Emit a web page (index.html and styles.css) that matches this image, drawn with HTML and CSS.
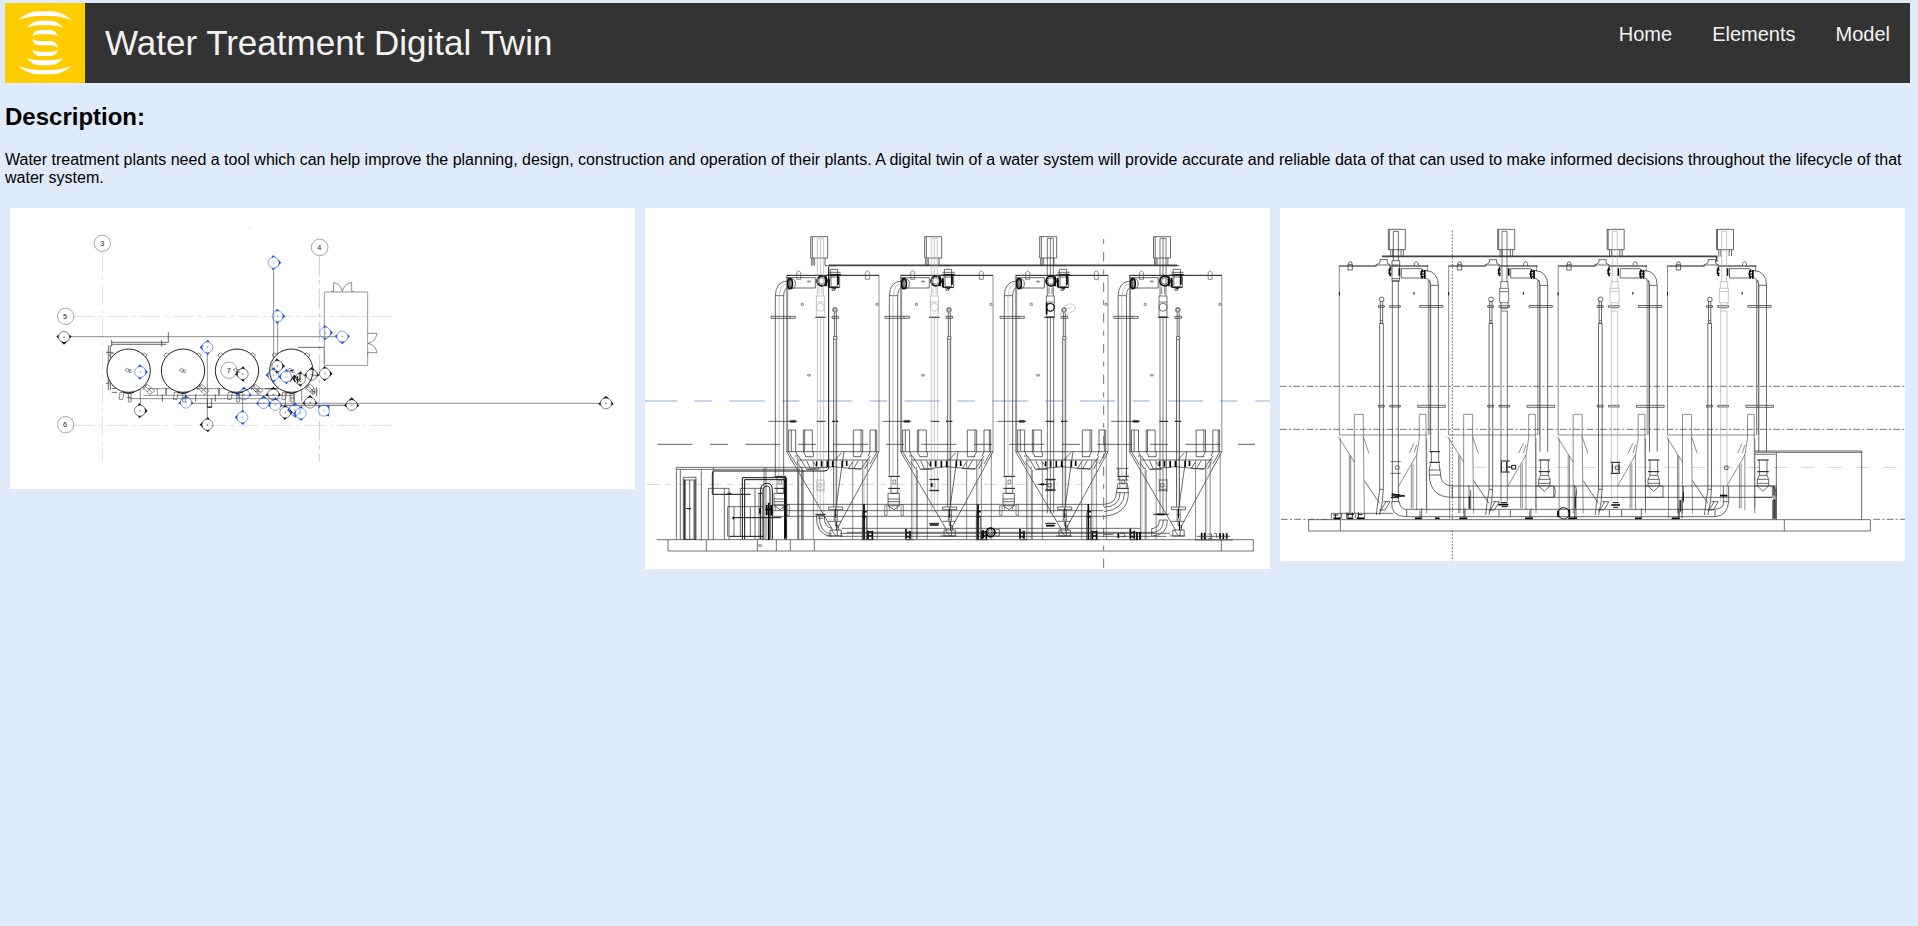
FILE: index.html
```html
<!DOCTYPE html>
<html lang="en">
<head>
<meta charset="utf-8">
<title>Water Treatment Digital Twin</title>
<link rel="stylesheet" href="styles.css">
</head>
<body>
<header class="navbar">
  <svg class="logo" viewBox="15 9 240 240" aria-label="Logo">
    <path d="M54 60Q85 34 115 34H155Q185 34 215 60Q180 48 155 48H115Q90 48 54 60Z"/>
    <path d="M81 83Q98 62 118 62H152Q172 62 189 83Q170 76 152 76H118Q100 76 81 83Z"/>
    <path d="M97 108Q102 90 120 90H150Q168 90 173 108Q162 103 150 103H120Q108 103 97 108Z"/>
    <path d="M97 117Q108 123 120 123H150Q170 123 174 143Q163 136 150 136H120Q100 136 97 117Z"/>
    <path d="M97 150Q108 155 120 155H150Q162 155 173 150Q168 168 150 168H120Q102 168 97 150Z"/>
    <path d="M81 175Q100 181 118 181H152Q170 181 189 175Q172 196 152 196H118Q98 196 81 175Z"/>
    <path d="M54 198Q90 210 115 210H155Q180 210 215 198Q185 223 155 223H115Q85 223 54 198Z"/>
  </svg>
  <div class="brand">Water Treatment Digital Twin</div>
  <nav class="links"><a href="#">Home</a><a href="#">Elements</a><a href="#">Model</a></nav>
</header>
<main>
  <h2>Description:</h2>
  <p>Water treatment plants need a tool which can help improve the planning, design, construction and operation of their plants. A digital twin of a water system will provide accurate and reliable data of that can used to make informed decisions throughout the lifecycle of that water system.</p>
  <section class="row">
    <div class="column">
      <svg class="drawing plan" viewBox="30 24 1875 843">
        <defs>
          <g id="mark"><circle class="ring" r="16.500"/><path class="tip" d="M-23 2L0-23L23 2L15 7A16 16 0 0 0 9-13L0-16L-9-13A16 16 0 0 0-15 7Z"/><path class="ring" d="M-3 0H3"/></g>
          <g id="plan-tank">
            <circle class="tank" cx="386" cy="512" r="65"/>
            <path class="mid" d="M334 473l-6-8 8-6 10 5M438 473l3-9-9-5-8 4M374 511l8-7 5 6 9 0M376 510l8 7 4-8v8h8"/>
            <path class="mid" d="M428 561l14-8 22 19-14 12zM434 557l22 20M440 554l-12 16M454 564l-13 11M360 577l-3 21h11l4-21zM378 579h15v27h-8v-24M385 594h12"/>
            <path class="thick" d="M370 577q16 7 32 0"/>
          </g>
        </defs>
        <path class="axis pale" d="M307 155V783M222 349H1174M222 676H1174"/>
        <path class="axis" d="M958 167V783"/>
        <path class="mid" d="M212 410H1010M821 208V520M833 369V500M578 610H1800M833 526H950M421 536V612M622 462V655M728 540V632M856 548V622"/>
        <path class="ink" d="M335 427H505V397M335 433H499M325 436V570M331 436V570M335 420V440M485 420V440M318 457H340M318 550H328M894 442H973V492M850 616H1036M622 595v27h13v-27M335 565H352M335 577H352"/>
        <path class="mid" d="M445 566H830M430 586H880M390 596H840M472 566v20M498 566v20M657 566v20M870 586v20M905 540v65M883 560v60"/>
        <path class="ink" d="M487 583v22M587 583v22M646 583v22M498 564v20M657 564v20M672 566h50M795 566h40M950 562v26M943 568v14"/>
        <use href="#plan-tank"/><use href="#plan-tank" x="163"/><use href="#plan-tank" x="325"/><use href="#plan-tank" x="488"/>
        <path class="green" d="M766 575h16M774 567v16M930 575h16M938 567v16M380 592h12M386 586v12"/>
        <path class="room" d="M973 276H1103V496H973Z"/>
        <path class="mid" d="M993 274H1001V247Q1022 252 1027 274Q1032 252 1055 247V274H1061M1103 400H1131Q1127 425 1104 430Q1127 435 1131 458H1103V464"/>
        <path class="thick" d="M622 621h14M870 512h10M870 545l12-18 12 18M882 524l20 22M893 528v22M885 546l-8-16M900 520v20"/>
        <g class="grid-bubble">
          <circle cx="307" cy="130" r="24.500"/><circle cx="959" cy="142" r="25"/><circle cx="197" cy="349" r="24.500"/><circle cx="197" cy="674" r="24.500"/><circle cx="687" cy="511" r="24.500"/>
          <text x="307" y="138">3</text><text x="958" y="150">4</text><text x="195" y="357">5</text><text x="195" y="682">6</text><text x="686" y="519">7</text>
        </g>
        <g class="black">
          <use href="#mark" transform="translate(192 411) rotate(180)"/><use href="#mark" transform="translate(420 632) rotate(90)"/><use href="#mark" transform="translate(622 674) rotate(-90)"/><use href="#mark" transform="translate(728 522) rotate(-90)"/><use href="#mark" transform="translate(975 521) rotate(90)"/><use href="#mark" transform="translate(1055 615)"/><use href="#mark" transform="translate(1818 610)"/><use href="#mark" transform="translate(930 608)"/><use href="#mark" transform="translate(856 637) rotate(90)"/><use href="#mark" transform="translate(820 583)"/><use href="#mark" transform="translate(832 498) rotate(90)"/><use href="#mark" transform="translate(935 524)"/><use href="#mark" transform="translate(900 537) rotate(-90)"/>
        </g>
        <g class="blue">
          <use href="#mark" transform="translate(821 188) rotate(90)"/><use href="#mark" transform="translate(833 349) rotate(90)"/><use href="#mark" transform="translate(976 398) rotate(90)"/><use href="#mark" transform="translate(1027 410) rotate(180)"/><use href="#mark" transform="translate(622 442) rotate(-90)"/><use href="#mark" transform="translate(421 516) rotate(90)"/><use href="#mark" transform="translate(558 608)"/><use href="#mark" transform="translate(732 583)"/><use href="#mark" transform="translate(727 652) rotate(-90)"/><use href="#mark" transform="translate(791 609)"/><use href="#mark" transform="translate(826 615)"/><use href="#mark" transform="translate(820 525) rotate(-90)"/><use href="#mark" transform="translate(858 530) rotate(-90)"/><use href="#mark" transform="translate(902 640) rotate(-90)"/><use href="#mark" transform="translate(884 630) rotate(-90)"/><use href="#mark" transform="translate(972 632) rotate(45)"/>
        </g>
        <path class="axis" d="M749 82h4"/>
      </svg>
    </div>
    <div class="column">
      <svg class="drawing front" viewBox="15 24 1875 1083">
        <defs>
          <g id="front-bay">
            <path class="ink" d="M512 110H563V174H512ZM517 110V174M515 175V197M523 175V197M519 175V197M555 174V197H590"/>
            <path class="mid" d="M440 755V226M443 230V755M717 226V755"/>
            <path class="thick" d="M440 226H717"/>
            <path class="mid" d="M470 238V217q6-9 12 0V238ZM470 226h12M676 238V217q6-9 12 0V238Z"/>
            <path class="ink" d="M440 233H526V264H450M571 208H593V226M571 208V226M566 217H602M562 223H604M566 231H599V263H566M573 226V260H592V226M576 265v6h8v-6"/>
            <circle class="heavy" cx="546" cy="243" r="15"/><circle class="ink" cx="546" cy="243" r="10"/>
            <path class="heavy" d="M594 226v28M558 229v30M566 234v28"/>
            <path class="thick" d="M571 224H602M568 238v24h30M578 266h10"/>
            <ellipse class="heavy" cx="450" cy="251" rx="7" ry="15"/><ellipse class="ink" cx="456" cy="251" rx="10" ry="14"/><path class="thick" d="M450 238v26"/>
            <path class="ink" d="M406 287Q407 246 441 243M431 287Q432 268 441 263M406 287H431M406 287V826M431 287V826"/>
            <path class="light" d="M417 287V826M418 287Q421 254 440 251"/>
            <path class="ink" d="M393 349H466V355H393ZM450 349v6M385 664H472M452 661H466V667H452ZM576 349h20v6h-20ZM576 664h20"/>
            <path class="thick" d="M448 664h20M526 352h31M530 664h26M576 664h18"/>
            <path class="mid" d="M484 310h6v6h-6ZM708 310h6v6h-6ZM503 524h8v4h-8ZM503 243h8v3h-8ZM581 325h8v8h-8Z"/>
            <circle class="ink" cx="585" cy="330" r="7"/>
            <path class="ink" d="M583 338V410M589 338V410M581 410h10v8h-10ZM581 418V920M590 418V920"/>
            <path class="light" d="M586 418V915"/>
            <path class="ink" d="M446 690H467V755M446 690V755M490 690H517V755M490 690V755M640 690H668V755M640 690V755M690 690H710V755M690 690V755M494 690V755M663 690V755M706 690V755M454 690V755"/>
            <path class="ink" d="M440 755H717M440 755L578 990M717 755L592 985M446 755L470 795M711 755L690 792M490 755L498 770M668 755L660 770M467 755l6 13M690 755l-5 13M496 770H520V755M640 755V770H664M474 780H690M465 768H476L500 808H536L517 782M690 768L664 806H625L640 782M500 782l12 26M655 782l-14 24M470 785l15 22M686 785l-12 22M500 808L578 800L664 808M585 780L605 758M612 755L587 930"/>
            <path class="heavy" d="M545 782v18M562 782v20M578 782v20M607 782v18M620 782v16M530 784v14"/>
            <path class="mid" d="M473 770V1018M487 800V1018M490 810V1018M520 785V1018M638 785V1018M668 780V1018M682 780V1018M712 760V1018"/>
            <path class="light" d="M477 770V1018M672 780V1018"/>
            <path class="thick" d="M403 829H438M403 865H438"/><path class="mid" d="M411 829V865M430 829V865M417 840h8v12h-8Z"/>
            <path class="ink" d="M566 921H608V929H566ZM583 929v30M592 929v30M583 945h9M580 960h14M586 965v12h10v14M565 964H605M570 990h34v18h-34ZM560 1008h48M574 990l14 18M592 990v18"/>
            <path class="thick" d="M587 925v30M590 965v26"/>
          </g>
          <g id="front-riser">
            <path class="pipe" d="M532 115H550V288M532 115V288M541 115V225M537 262V282M546 262V282M529 288H553V350H529ZM529 306H553M532 350V940M551 350V940M541 350V940"/>
            <circle class="pipe" cx="541" cy="322" r="12"/>
            <path class="pipe" d="M526 840H556M530 843V868H553V843M526 872H556"/><path class="pipe" d="M534 851h10v10h-10Z"/>
          </g>
          <g id="front-drop">
            <path class="ink" d="M411 865V880H431V865M402 880H436V917L420 929L402 917ZM402 897H436M402 905H436M402 917H436"/>
            <path class="mid" d="M392 917H399V946H392ZM441 914H448V946H441ZM406 917v14M430 917v14"/>
          </g>
          <g id="foot">
            <path class="heavy" d="M672 912V1018M668 935h12M668 950h12"/><path class="ink" d="M667 938V1018M679 950V1018"/>
            <path class="heavy" d="M684 992v25M697 992v25M684 996h13M684 1008h13M798 986v30M810 992v24M798 998h12M798 1010h12"/><path class="thick" d="M665 1019H702M796 1019H820"/>
          </g>
        </defs>
        <path class="level-blue" d="M15 603H1890"/>
        <path class="level" d="M52 733H1845"/>
        <path class="level-light" d="M20 853H1330"/>
        <path class="level-vert" d="M1391 117V1107"/>
        <path class="rail" d="M566 196H1612"/>
        <use href="#front-bay"/><use href="#front-bay" x="342"/><use href="#front-bay" x="687"/><use href="#front-bay" x="1028.500"/>
        <g class="faint"><use href="#front-riser"/><use href="#front-riser" x="342"/></g>
        <g class="strong"><use href="#front-riser" x="690"/><use href="#front-riser" x="1028"/></g>
        <use href="#front-drop"/><use href="#front-drop" x="342"/><use href="#front-drop" x="687"/>
        <use href="#foot"/><use href="#foot" x="342"/><use href="#foot" x="673"/>
        <path class="thick" d="M566 200V800Q566 813 552 813H220Q217 813 217 825V883H332M868 838H897M868 872H897M1216 838H1247M1216 870H1247M1193 853H1222M526 943H557M868 970H897M1216 970H1247M1540 943H1586"/>
        <path class="heavy" d="M875 850v10M1202 853h10M1220 308v35M870 975h26M1218 977h26M1552 943h22"/>
        <circle class="thick" cx="1231" cy="322" r="12"/>
        <g class="outline">
          <path d="M50 1019H1780M84 1019V1053H1840V1019H1780M199 1019V1053M352 1019V1053M409 1019V1053M451 1019V1053M523 1019V1053M1744 1019V1053"/>
          <path d="M109 1019V802H560M109 808H480M121 808V1019M184 808V1019M220 802V1019M372 802V1019M378 802V1019M475 808V1019M485 808V1019"/>
        </g>
        <path class="ink" d="M130 832H168V1018H130ZM136 840H162V1018M136 840V1018M149 840V1018M205 865H267V1019M205 865V1019M253 865V1019M301 865H370M301 865V1010M345 865V1019M263 920H370M263 920V1010M282 922V1010M331 922V1010M357 880V1019M440 833V1019"/>
        <path class="thick" d="M133 838V1018M165 838V1018M307 1018V833H438V1018M314 1018V839H434V1018M280 953H424M268 1009H370M362 1018V870Q362 850 382 850Q397 850 397 870V1018M369 1018V872Q370 858 382 858Q390 858 390 872V1018M139 926h14M262 880h12M355 880h12"/>
        <path class="heavy" d="M386 908V1020M380 915v30M394 915v30M376 928h22M280 950v8M436 833v180M360 925v16"/>
        <path class="ink" d="M400 913H1390M400 932H1390M400 949H1390M605 985H1500M600 1000H1590M600 1009H1580M620 997H1540"/>
        <path class="ink" d="M529 947Q528 1005 575 1009M553 947Q552 982 575 985M538 947Q538 1000 575 1002M529 947H553M533 955H550"/>
        <path class="ink" d="M1429 805H1466M1436 805V840M1459 805V840M1431 840H1465M1434 850H1462L1465 878H1429ZM1429 878Q1430 910 1392 913M1465 878Q1465 942 1392 949M1454 878Q1452 929 1392 935M1440 878Q1440 920 1392 922"/>
        <path class="ink" d="M1558 960Q1559 984 1535 986M1582 960Q1583 1005 1538 1008M1570 960Q1570 996 1535 998M1558 960H1582M1535 986V1008"/>
        <circle class="heavy" cx="1052" cy="997" r="13"/><circle class="ink" cx="1052" cy="997" r="8"/>
        <path class="heavy" d="M1030 990v25M1435 1000v14M1491 996v24M1500 996v24M1685 998v20M1694 998v20M1740 1000v16M1750 1000v18M1760 1000v16"/>
        <path class="ink" d="M1066 988h12v20h-12M1390 1003h30M1440 1000h12l4 10h-14M1670 1009H1770M1665 1020H1778M1705 1002h10v14h-10M1722 1000h8v14"/>
        <g class="faint"><path class="pipe" d="M1262 345Q1265 318 1285 313Q1301 308 1306 322Q1308 336 1288 337Q1282 338 1280 352M1275 335q4-12 18-12"/></g>
        <path class="mid" d="M356 1034h8v5h-8Z"/>
        <path class="green" d="M178 1020h10"/>
      </svg>
    </div>
    <div class="column">
      <svg class="drawing rear" viewBox="30 24 1875 1059">
        <defs>
          <g id="rear-bay">
            <path class="ink" d="M355 88H406V149H355ZM358 88V149M362 149V170M368 149V170M393 149V168M400 149V168"/>
            <path class="mid" d="M208 705V197M475 240V705M472 197V215M480 240V705"/>
            <path class="thick" d="M208 198H320M358 198H475"/>
            <path class="ink" d="M234 210V194H247V210ZM235 194q0-9 6-9t6 9M433 197V190q6-10 12 0v7M316 195H360M318 195L330 188V179H352V190L362 195M394 206V234M394 234H455M394 206H455"/>
            <path class="heavy" d="M362 202q-8 12 0 26M388 205v22M458 208q-8 14 0 28M464 210v26"/>
            <path class="thick" d="M452 214h15M450 222h17M452 230h15M355 210h10M355 220h10"/>
            <path class="ink" d="M467 211Q505 215 505 256M467 235Q481 238 482 256M482 256H505M482 256V755M505 256V755"/>
            <path class="ink" d="M449 316.500H519V322H449ZM443 616H526V622H443ZM359 317h32v5h-32ZM359 616h32v5h-32ZM325 317h18v5h-18ZM325 616h18v5h-18Z"/>
            <circle class="ink" cx="335" cy="298" r="7"/>
            <path class="ink" d="M331 303V362M338 303V362M329 370H340V865L337 905M329 370V870L323 910M331 362h7v8h-7ZM329 868h11M323 910l-4 35M337 905l-8 40M340 905H360L345 930H328M348 905L330 935M329 910L283 842"/>
            <path class="mid" d="M208 705H472M205 710L253 786M253 643H280V710L283 940M253 643V940M448 643H468V710L470 940M448 643V715L440 765V930M280 710L297 760M432 730L418 760M440 735l-8 24M440 765L386 858M211 715V955M238 765V940M242 768V940M424 795V925M429 790V925M470 715V925"/>
            <path class="thick" d="M208 276v10M432 276v8"/>
          </g>
          <g id="rear-riser">
            <path class="pipe" d="M370 94H385V245M370 94V245M366 245H388V265M366 245V265M363 265H390V308H363ZM363 275H390M367 308V325M388 308V325M367 333H386V905M367 325V905M367 325H387"/>
          </g>
          <g id="rear-drop">
            <path class="thick" d="M478 780H512M478 815H512"/><path class="ink" d="M484 780V815M507 780V815M484 815V826H507V815M484 826L478 838V858L495 874L512 858V838L507 826M478 838H512M478 850H512M470 858H523V892H470"/>
          </g>
        </defs>
        <path class="rear-level" d="M30 559H1905M30 688H1905M33 958H210M1810 958H1905"/>
        <path class="level-light wide" d="M610 802H1905"/>
        <path class="rear-vert" d="M547 92V958M547 992V1083"/>
        <path class="rail" d="M336 169H1340V185"/>
        <use href="#rear-bay"/><use href="#rear-bay" x="328"/><use href="#rear-bay" x="656.500"/><use href="#rear-bay" x="984.500"/>
        <g class="strong"><use href="#rear-riser" x="326"/></g>
        <g class="faint"><use href="#rear-riser" x="657"/><use href="#rear-riser" x="985"/></g>
        <path class="ink" d="M370 94H385V182M370 94V182M366 182H389V236H366ZM367 242H385V905M367 242V905M366 195H389M366 236V244H388V236"/>
        <use href="#rear-drop" x="328"/><use href="#rear-drop" x="656"/><use href="#rear-drop" x="984"/>
        <path class="ink" d="M482 790L478 810V825Q480 892 547 892V858Q512 855 512 825L507 790M478 810H512M478 825H512M547 858H1505M547 892H1505M410 928H1335M410 950H1335M365 905Q362 950 410 950V928Q390 928 388 905ZM362 785H392M362 820H392M1360 905Q1364 925 1335 928V950Q1372 948 1376 905ZM1360 858V905M1376 858V905"/>
        <path class="thick" d="M478 755H510M478 787H510M692 783H719M692 816H719M1022 787H1050M1022 820H1050"/>
        <path class="ink" d="M484 755V787M506 755V787"/>
        <path class="heavy" d="M365 885H390M685 914H715M1024 915H1050M1350 887H1372"/>
        <path class="thick" d="M694 786v28M710 786v28M1027 790v28M1047 790v28M365 881l40 7-40 3M362 893h25M712 801h12M725 796v11h12v-11ZM692 908h20M695 920h18M1028 908h18M1030 922h15"/>
        <circle class="ink" cx="382" cy="803" r="6"/><path class="ink" d="M1036 798h12v10h-12ZM1364 798h10v10h-10Z"/>
        <circle class="thick" cx="881" cy="940" r="17"/><path class="heavy" d="M864 932v18M898 930v22"/>
        <path class="ink" d="M597 855v72M602 870v57M914 855v100M918 870v85M1240 858v50M1236 895v60M1228 900v55M1512 855v103M1518 855v103M1506 855q14 8 12 36M1508 900v58"/>
        <path class="thick" d="M598 890v35M916 890v35M1240 875v28M1515 898v58M1512 898v58M1232 900v35M1512 858v28"/>
        <path class="heavy" d="M190 955h22M232 955h18M260 955h24M435 955h20M495 955h14M568 955h24M765 955h24M895 955h26M1095 955h20M1205 955h24"/>
        <path class="thick" d="M190 945h15M230 943h22M265 944h12M265 937v18M234 938v14M247 938v14M196 942v12"/>
        <path class="ink" d="M184 940H370M184 940V955M215 940v15M230 937v20M256 940v15M284 940v15M455 925v32M450 932v20M585 925v32M582 932v20M783 925v32M779 932v20M1114 925v32M1225 925v32M687 930v20M721 930v20M1018 930v20M1055 930v20M917 858q6 16 0 34M853 858q6 16 0 34"/>
        <path class="outline" d="M116 959H1801V993H116ZM211 959V993M1543 959V993"/>
        <path class="ink" d="M1455 753H1775V959M1455 757H1775M1519 757V959M1455 763H1516"/>
      </svg>
    </div>
  </section>
</main>
</body>
</html>
```
FILE: styles.css
```css
* { box-sizing: border-box; }
body {
  margin: 3px 8px 0 5px;
  background: #dfeafb;
  color: #000;
  font-family: "Liberation Sans", Arial, sans-serif;
  font-size: 16px;
}
.navbar { display: flex; height: 80px; background: #333; color: #f2f2f2; }
.logo { width: 80px; height: 80px; background: #fc0; fill: #fff; }
.brand { padding: 20px; font-size: 35px; line-height: 40px; }
.links { display: flex; margin-left: auto; font-size: 20px; }
.links a { padding: 20px; line-height: 23px; color: #f2f2f2; text-decoration: none; }
h2 { margin: 20px 0 21px; font-size: 24px; line-height: 27px; }
p { margin: 0 0 16px; line-height: 18px; }
.row { display: grid; grid-template-columns: repeat(3, 1fr); align-items: start; }
.column { padding: 5px; }
.drawing { display: block; width: 100%; background: #fff; fill: none; stroke-width: 2; }
.plan { height: 281px; }
.front { height: 361px; }
.rear { height: 353px; }
.ink { stroke: #333; stroke-width: 2.200; }
.mid { stroke: #555; stroke-width: 2; }
.light { stroke: #aaa; }
.thick { stroke: #111; stroke-width: 3; }
.heavy { stroke: #000; stroke-width: 5; }
.tank { stroke: #222; stroke-width: 3; fill: #fff; }
.room { stroke: #999; stroke-width: 3; }
.rail { stroke: #444; stroke-width: 5; }
.outline { stroke: #555; stroke-width: 2.500; }
.green { stroke: #3b7a3b; stroke-width: 2; }
.axis { stroke: #ccc; stroke-width: 3; stroke-dasharray: 60 13 13 13; }
.axis.pale { stroke: #e0e0e0; }
.grid-bubble circle { stroke: #777; stroke-width: 2; }
.grid-bubble text { fill: #222; font-size: 22px; text-anchor: middle; }
.ring { stroke: currentColor; stroke-width: 1.500; }
.tip { fill: currentColor; }
.black { color: #111; }
.blue { color: #1450d2; }
.pipe { stroke: currentColor; stroke-width: 2; }
.faint { color: #aaa; }
.strong { color: #333; }
.level-blue { stroke: #b3c6ec; stroke-width: 4; stroke-dasharray: 106 52 52 53; stroke-dashoffset: 10; }
.level { stroke: #444; stroke-width: 2.500; stroke-dasharray: 105 53 54 52; }
.level-light { stroke: #ccc; stroke-width: 2.500; stroke-dasharray: 38 18 18 18; }
.level-light.wide { stroke-dasharray: 40 42; }
.level-vert { stroke: #555; stroke-width: 2.500; stroke-dasharray: 14 25 28 25; }
.rear-level { stroke: #555; stroke-width: 2.500; stroke-dasharray: 20 7 6 7; }
.rear-vert { stroke: #444; stroke-width: 2.500; stroke-dasharray: 5 5; }
```
